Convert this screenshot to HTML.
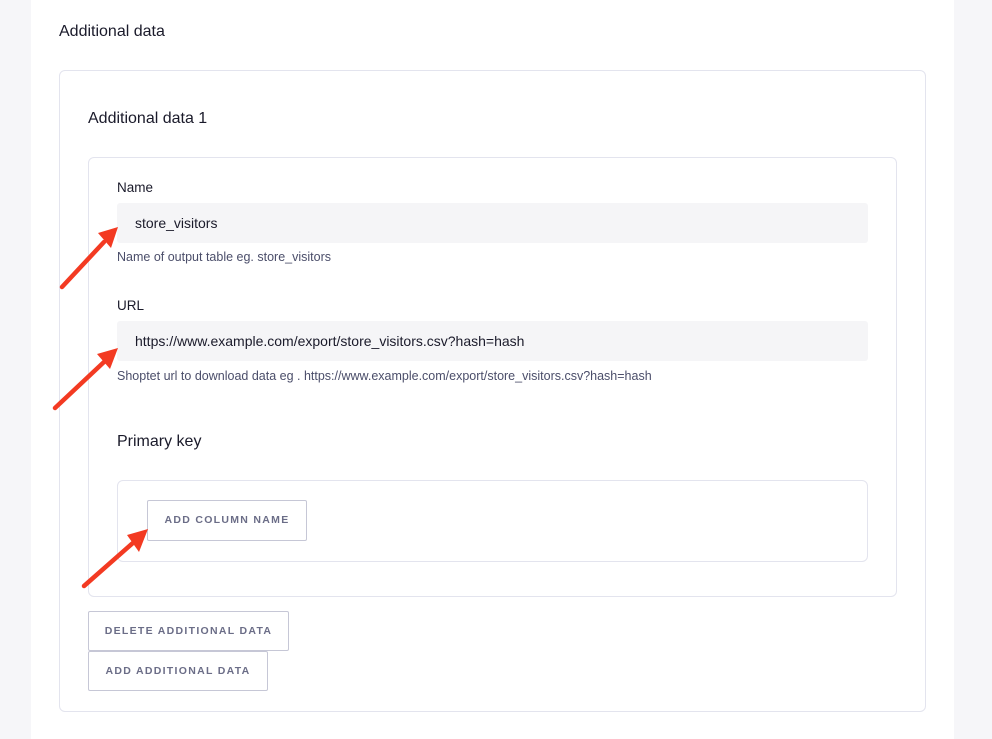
<!DOCTYPE html>
<html><head><style>
body{margin:0;width:992px;height:739px;background:#f6f6f9;font-family:"Liberation Sans",sans-serif;position:relative;overflow:hidden}
.abs{position:absolute;box-sizing:border-box}
.panel{left:31px;top:0;width:923px;height:739px;background:#fff}
.card{border:1px solid #e3e4ee;border-radius:6px;background:#fff}
.inp{background:#f5f5f7;border-radius:3px;font-size:14px;color:#1a1a2a;padding-left:18px;line-height:40px}
.help{font-size:12.5px;color:#4b4e6a}
.lbl{font-size:14px;color:#1a1a2a}
.btn{border:1px solid #c6c7d6;border-radius:2px;background:#fff;font-size:10.5px;letter-spacing:1.3px;color:#6b6d87;font-weight:bold;text-align:center;line-height:39px}
</style></head><body>
<div class="abs panel"></div>
<div class="abs lbl" style="left:59px;top:23px;font-size:16px">Additional data</div>
<div class="abs card" style="left:59px;top:70px;width:867px;height:642px"></div>
<div class="abs lbl" style="left:88px;top:110px;font-size:16px">Additional data 1</div>
<div class="abs card" style="left:88px;top:157px;width:809px;height:440px"></div>
<div class="abs lbl" style="left:117px;top:180px;font-size:13.5px">Name</div>
<div class="abs inp" style="left:117px;top:203px;width:751px;height:40px">store_visitors</div>
<div class="abs help" style="left:117px;top:250px">Name of output table eg. store_visitors</div>
<div class="abs lbl" style="left:117px;top:298px;font-size:13.5px">URL</div>
<div class="abs inp" style="left:117px;top:321px;width:751px;height:40px">https://www.example.com/export/store_visitors.csv?hash=hash</div>
<div class="abs help" style="left:117px;top:369px">Shoptet url to download data eg . https://www.example.com/export/store_visitors.csv?hash=hash</div>
<div class="abs lbl" style="left:117px;top:433px;font-size:16px">Primary key</div>
<div class="abs card" style="left:117px;top:480px;width:751px;height:82px"></div>
<div class="abs btn" style="left:147px;top:500px;width:160px;height:41px">ADD COLUMN NAME</div>
<div class="abs btn" style="left:88px;top:611px;width:201px;height:40px">DELETE ADDITIONAL DATA</div>
<div class="abs btn" style="left:88px;top:651px;width:180px;height:40px">ADD ADDITIONAL DATA</div>
<svg class="abs" style="left:0;top:0" width="992" height="739">
<g stroke="#f33a22" stroke-width="4.5" stroke-linecap="round" fill="#f33a22">
<line x1="62" y1="287" x2="104" y2="242"/><polygon stroke="none" points="118,227 98,233 111,248"/>
<line x1="55" y1="408" x2="104" y2="362"/><polygon stroke="none" points="118,348 97,354 110,369"/>
<line x1="84" y1="586" x2="134" y2="542"/><polygon stroke="none" points="148,529 127,535 139,552"/>
</g></svg>
</body></html>
